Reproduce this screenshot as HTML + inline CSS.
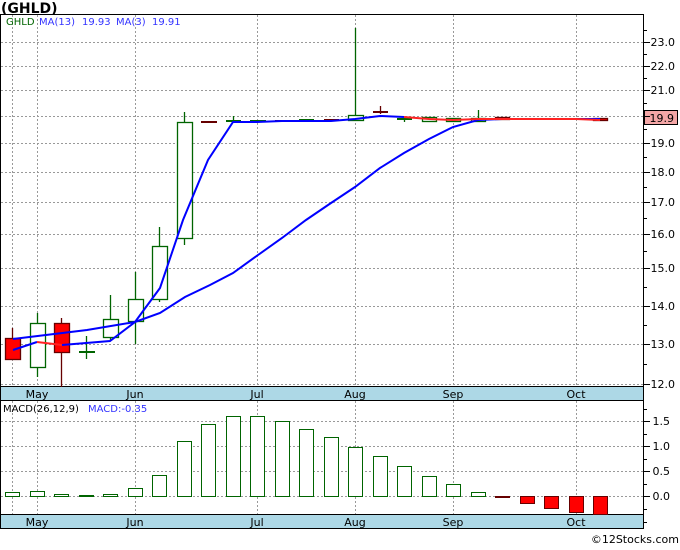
<!DOCTYPE html>
<html><head><meta charset="utf-8"><style>
body{margin:0;background:#fff;width:680px;height:546px;overflow:hidden;font-family:"DejaVu Sans",sans-serif}
</style></head><body>
<svg width="680" height="546" viewBox="0 0 680 546" xmlns="http://www.w3.org/2000/svg" font-family="DejaVu Sans, sans-serif">
<rect width="680" height="546" fill="#fff"/>
<text x="1" y="13" font-size="14" font-weight="bold" fill="#000">(GHLD)</text>
<rect x="0.5" y="14.5" width="643" height="386" fill="#fff" stroke="#000"/>
<rect x="0.5" y="400.5" width="643" height="128" fill="#fff" stroke="#000"/>
<rect x="1" y="387" width="642" height="13" fill="#add8e6"/>
<rect x="1" y="515" width="642" height="13" fill="#add8e6"/>
<line x1="0" y1="386.5" x2="643" y2="386.5" stroke="#000"/>
<line x1="0" y1="514.5" x2="643" y2="514.5" stroke="#000"/>
<g stroke="#999" stroke-dasharray="2,2" stroke-width="1">
<line x1="12.5" y1="15" x2="12.5" y2="386"/><line x1="37.5" y1="15" x2="37.5" y2="386"/><line x1="135.5" y1="15" x2="135.5" y2="386"/><line x1="257.5" y1="15" x2="257.5" y2="386"/><line x1="355.5" y1="15" x2="355.5" y2="386"/><line x1="453.5" y1="15" x2="453.5" y2="386"/><line x1="576.5" y1="15" x2="576.5" y2="386"/>
<line x1="12.5" y1="401" x2="12.5" y2="514"/><line x1="37.5" y1="401" x2="37.5" y2="514"/><line x1="135.5" y1="401" x2="135.5" y2="514"/><line x1="257.5" y1="401" x2="257.5" y2="514"/><line x1="355.5" y1="401" x2="355.5" y2="514"/><line x1="453.5" y1="401" x2="453.5" y2="514"/><line x1="576.5" y1="401" x2="576.5" y2="514"/>
<line x1="1" y1="42.5" x2="643" y2="42.5"/><line x1="1" y1="66.5" x2="643" y2="66.5"/><line x1="1" y1="90.5" x2="643" y2="90.5"/><line x1="1" y1="116.5" x2="643" y2="116.5"/><line x1="1" y1="143.5" x2="643" y2="143.5"/><line x1="1" y1="172.5" x2="643" y2="172.5"/><line x1="1" y1="202.5" x2="643" y2="202.5"/><line x1="1" y1="234.5" x2="643" y2="234.5"/><line x1="1" y1="268.5" x2="643" y2="268.5"/><line x1="1" y1="306.5" x2="643" y2="306.5"/><line x1="1" y1="344.5" x2="643" y2="344.5"/><line x1="1" y1="384.5" x2="643" y2="384.5"/>
<line x1="1" y1="421.5" x2="643" y2="421.5"/><line x1="1" y1="446.5" x2="643" y2="446.5"/><line x1="1" y1="471.5" x2="643" y2="471.5"/><line x1="1" y1="496.5" x2="643" y2="496.5"/>
</g>
<g font-size="10" fill="#000">
<text x="6" y="25" fill="#006400">GHLD</text>
<text x="39" y="25" fill="#3333ff">MA(13)</text><text x="82" y="25" fill="#3333ff">19.93</text>
<text x="116" y="25" fill="#3333ff">MA(3)</text><text x="152" y="25" fill="#3333ff">19.91</text>
<text x="3" y="412">MACD(26,12,9)</text><text x="88" y="412" fill="#3333ff">MACD:-0.35</text>
<g text-anchor="middle" font-size="11"><text x="37" y="398">May</text><text x="135" y="398">Jun</text><text x="257" y="398">Jul</text><text x="355" y="398">Aug</text><text x="453" y="398">Sep</text><text x="576" y="398">Oct</text>
<text x="37" y="526">May</text><text x="135" y="526">Jun</text><text x="257" y="526">Jul</text><text x="355" y="526">Aug</text><text x="453" y="526">Sep</text><text x="576" y="526">Oct</text></g>
<g text-anchor="end" font-size="11"><text x="675" y="46">23.0</text><text x="675" y="70">22.0</text><text x="675" y="94">21.0</text><text x="675" y="147">19.0</text><text x="675" y="176">18.0</text><text x="675" y="206">17.0</text><text x="675" y="238">16.0</text><text x="675" y="272">15.0</text><text x="675" y="310">14.0</text><text x="675" y="348">13.0</text><text x="675" y="388">12.0</text>
<text x="670" y="425">1.5</text><text x="670" y="450">1.0</text><text x="670" y="475">0.5</text><text x="670" y="500">0.0</text></g>
<text x="679" y="543" text-anchor="end" font-size="11">©12Stocks.com</text>
</g>
<g stroke="#000">
<line x1="643" y1="42.5" x2="650" y2="42.5"/><line x1="643" y1="66.5" x2="650" y2="66.5"/><line x1="643" y1="90.5" x2="650" y2="90.5"/><line x1="643" y1="143.5" x2="650" y2="143.5"/><line x1="643" y1="172.5" x2="650" y2="172.5"/><line x1="643" y1="202.5" x2="650" y2="202.5"/><line x1="643" y1="234.5" x2="650" y2="234.5"/><line x1="643" y1="268.5" x2="650" y2="268.5"/><line x1="643" y1="306.5" x2="650" y2="306.5"/><line x1="643" y1="344.5" x2="650" y2="344.5"/><line x1="643" y1="384.5" x2="650" y2="384.5"/>
<line x1="643" y1="421.5" x2="650" y2="421.5"/><line x1="643" y1="446.5" x2="650" y2="446.5"/><line x1="643" y1="471.5" x2="650" y2="471.5"/><line x1="643" y1="496.5" x2="650" y2="496.5"/>
<line x1="643" y1="30.5" x2="647" y2="30.5"/><line x1="643" y1="54.5" x2="647" y2="54.5"/><line x1="643" y1="78.5" x2="647" y2="78.5"/><line x1="643" y1="103.5" x2="647" y2="103.5"/><line x1="643" y1="129.5" x2="647" y2="129.5"/><line x1="643" y1="157.5" x2="647" y2="157.5"/><line x1="643" y1="187.5" x2="647" y2="187.5"/><line x1="643" y1="218.5" x2="647" y2="218.5"/><line x1="643" y1="251.5" x2="647" y2="251.5"/><line x1="643" y1="287.5" x2="647" y2="287.5"/><line x1="643" y1="325.5" x2="647" y2="325.5"/><line x1="643" y1="364.5" x2="647" y2="364.5"/>
<line x1="643" y1="409.5" x2="647" y2="409.5"/><line x1="643" y1="434.5" x2="647" y2="434.5"/><line x1="643" y1="459.5" x2="647" y2="459.5"/><line x1="643" y1="484.5" x2="647" y2="484.5"/><line x1="643" y1="509.5" x2="647" y2="509.5"/><line x1="643" y1="522.5" x2="647" y2="522.5"/>
</g>
<rect x="644.5" y="110.5" width="33" height="14" fill="#f4a6a6" stroke="#000"/>
<text x="674" y="122" text-anchor="end" font-size="11" font-family="DejaVu Sans, sans-serif">19.9</text>
<line x1="643" y1="116.5" x2="650" y2="116.5" stroke="#000"/>
<g stroke-width="1.3">
<line x1="12.5" y1="328" x2="12.5" y2="359" stroke="#600"/><rect x="5.5" y="338.5" width="15" height="21" fill="#f00" stroke="#600"/>
<line x1="37.5" y1="313" x2="37.5" y2="377" stroke="#006400"/><rect x="30.5" y="323.5" width="15" height="44" fill="#fff" stroke="#006400"/>
<line x1="61.5" y1="318" x2="61.5" y2="387" stroke="#600"/><rect x="54.5" y="323.5" width="15" height="29" fill="#f00" stroke="#600"/>
<line x1="86.5" y1="336" x2="86.5" y2="359" stroke="#006400"/><line x1="79" y1="352" x2="95" y2="352" stroke="#006400" stroke-width="2"/>
<line x1="110.5" y1="295" x2="110.5" y2="340" stroke="#006400"/><rect x="103.5" y="319.5" width="15" height="18" fill="#fff" stroke="#006400"/>
<line x1="135.5" y1="272" x2="135.5" y2="344" stroke="#006400"/><rect x="128.5" y="299.5" width="15" height="22" fill="#fff" stroke="#006400"/>
<line x1="159.5" y1="227" x2="159.5" y2="302" stroke="#006400"/><rect x="152.5" y="246.5" width="15" height="53" fill="#fff" stroke="#006400"/>
<line x1="184.5" y1="112" x2="184.5" y2="245" stroke="#006400"/><rect x="177.5" y="122.5" width="15" height="116" fill="#fff" stroke="#006400"/>
<line x1="201" y1="122" x2="217" y2="122" stroke="#600" stroke-width="2"/>
<line x1="233.5" y1="116" x2="233.5" y2="122" stroke="#006400"/><line x1="226" y1="121" x2="241" y2="121" stroke="#006400" stroke-width="2"/>
<line x1="250" y1="121" x2="266" y2="121" stroke="#006400" stroke-width="2"/>
<line x1="275" y1="121" x2="290" y2="121" stroke="#600" stroke-width="2"/>
<line x1="299" y1="120" x2="314" y2="120" stroke="#006400" stroke-width="2"/>
<line x1="324" y1="120" x2="339" y2="120" stroke="#600" stroke-width="2"/>
<line x1="355.5" y1="28" x2="355.5" y2="121" stroke="#006400"/><rect x="348.5" y="115.5" width="15" height="5" fill="#fff" stroke="#006400"/>
<line x1="380.5" y1="106" x2="380.5" y2="114" stroke="#600"/><line x1="373" y1="112" x2="388" y2="112" stroke="#600" stroke-width="2"/>
<line x1="404.5" y1="117" x2="404.5" y2="122" stroke="#006400"/><line x1="397" y1="119" x2="412" y2="119" stroke="#006400" stroke-width="2"/>
<rect x="422.5" y="117.5" width="14" height="4" fill="#fff" stroke="#006400"/>
<rect x="446.5" y="118.5" width="14" height="3" fill="#fff" stroke="#006400"/>
<line x1="478.5" y1="110" x2="478.5" y2="121" stroke="#006400"/><rect x="471.5" y="118.5" width="14" height="3" fill="#fff" stroke="#006400"/>
<rect x="495.5" y="117.5" width="14" height="2" fill="#f00" stroke="#600"/>
<line x1="520" y1="119" x2="535" y2="119" stroke="#600" stroke-width="2"/>
<line x1="544" y1="119" x2="559" y2="119" stroke="#600" stroke-width="2"/>
<line x1="569" y1="119" x2="584" y2="119" stroke="#600" stroke-width="2"/>
<rect x="593.5" y="118.5" width="14" height="2" fill="#f00" stroke="#600"/>
</g>
<polyline fill="none" stroke="#00f" stroke-width="2" points="13,339 87,330 135,322 160,313 185,297 210,285 233,273 258,255 282,238 306,220 331,203 355,187 380,168 404,153 429,139 453,127 478,120 502,119 527,119 551,119 576,119 600,119"/>
<polyline fill="none" stroke="#00f" stroke-width="2" points="13,350 37,342"/>
<polyline fill="none" stroke="#f22" stroke-width="2" points="37,342 62,345"/>
<polyline fill="none" stroke="#00f" stroke-width="2" points="62,345 110,341 135,322 160,288 183,220 208,160 233,122 257,122 282,121 306,121 331,121 355,119 380,116 404,117"/>
<polyline fill="none" stroke="#f22" stroke-width="2" points="404,117 429,119 453,120 478,119 502,119 527,119 551,119 576,119 600,120"/>
<g stroke="#006400" fill="#fff" stroke-width="1">
<rect x="5.5" y="492.5" width="14" height="4"/><rect x="30.5" y="491.5" width="14" height="5"/><rect x="54.5" y="494.5" width="14" height="2"/><rect x="79.5" y="495.5" width="14" height="1"/><rect x="103.5" y="494.5" width="14" height="2"/><rect x="128.5" y="488.5" width="14" height="8"/><rect x="152.5" y="475.5" width="14" height="21"/><rect x="177.5" y="441.5" width="14" height="55"/><rect x="201.5" y="424.5" width="14" height="72"/><rect x="226.5" y="416.5" width="14" height="80"/><rect x="250.5" y="416.5" width="14" height="80"/><rect x="275.5" y="421.5" width="14" height="75"/><rect x="299.5" y="429.5" width="14" height="67"/><rect x="324.5" y="437.5" width="14" height="59"/><rect x="348.5" y="447.5" width="14" height="49"/><rect x="373.5" y="456.5" width="14" height="40"/><rect x="397.5" y="466.5" width="14" height="30"/><rect x="422.5" y="476.5" width="14" height="20"/><rect x="446.5" y="484.5" width="14" height="12"/><rect x="471.5" y="492.5" width="14" height="4"/>
</g>
<g stroke="#600" fill="#f00" stroke-width="1">
<rect x="495.5" y="496.5" width="14" height="1"/><rect x="520.5" y="496.5" width="14" height="7"/><rect x="544.5" y="496.5" width="14" height="12"/><rect x="569.5" y="496.5" width="14" height="16"/><rect x="593.5" y="496.5" width="14" height="18"/>
</g>
</svg>
</body></html>
